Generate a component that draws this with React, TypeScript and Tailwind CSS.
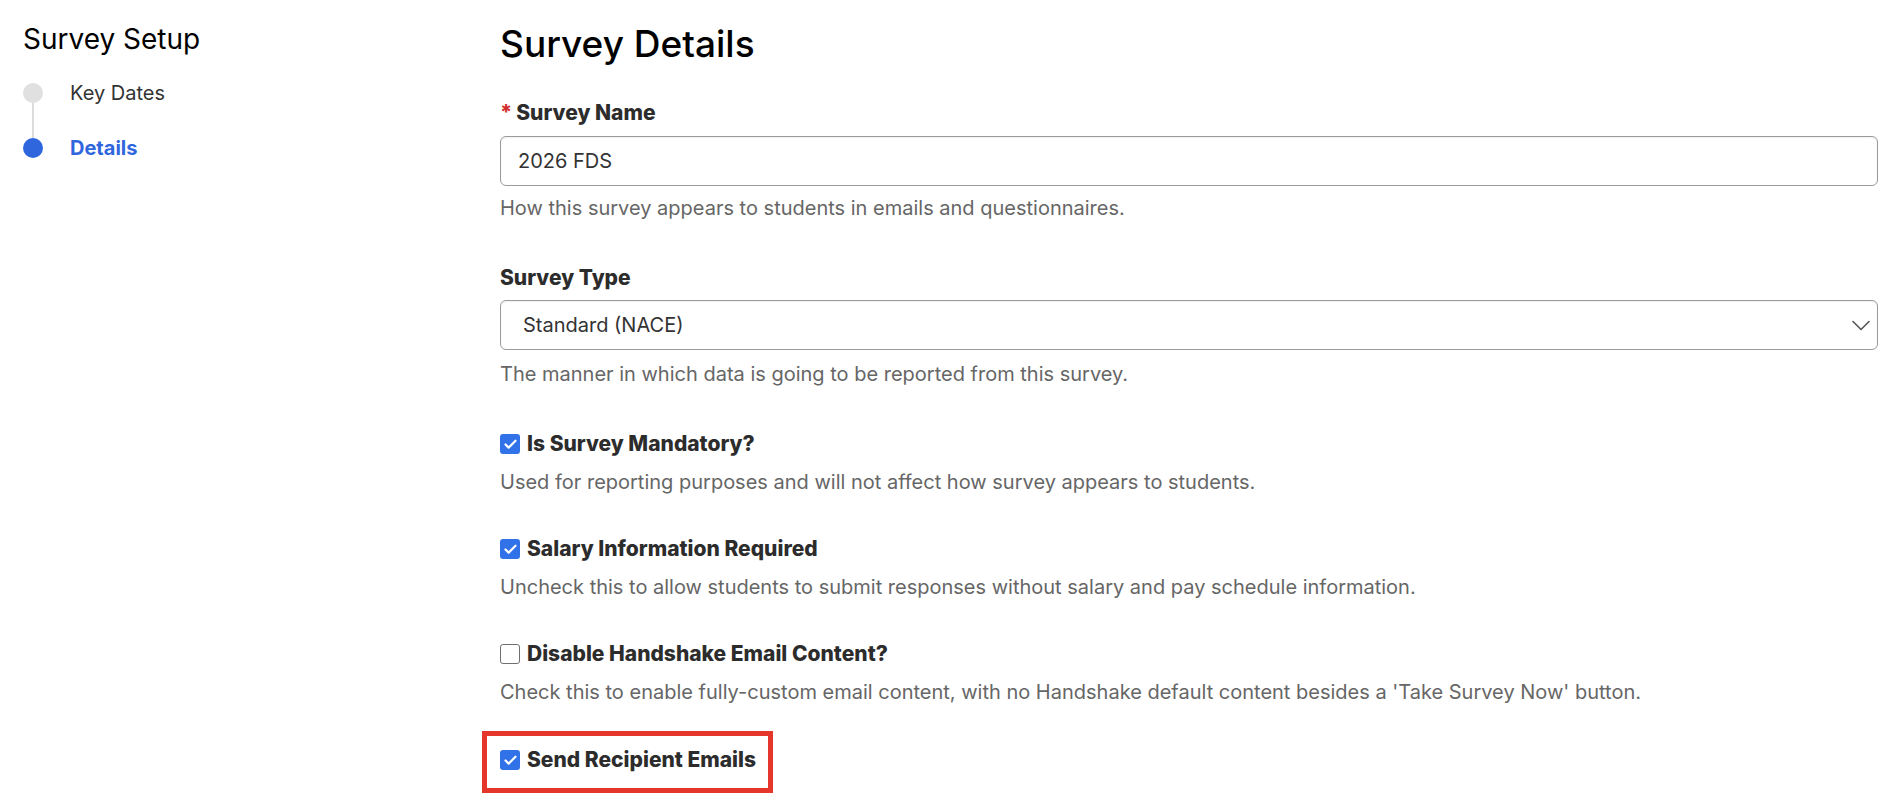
import { Check } from 'lucide-react';

const CheckBox = ({ checked }: { checked: boolean }) =>
  checked ? (
    <span className="flex h-[20px] w-[20px] shrink-0 items-center justify-center rounded-[3px] bg-[#3272e8]">
      <Check className="h-[15px] w-[15px] text-white" strokeWidth={3.5} />
    </span>
  ) : (
    <span className="h-[20px] w-[20px] shrink-0 rounded-[3px] border-[1.5px] border-[#6f6f6f] bg-white" />
  );

const CheckField = ({ label, help, checked, first }: { label: string; help: string; checked: boolean; first?: boolean }) => (
  <div className={first ? 'mt-[42px]' : 'mt-[39px]'}>
    <label className="flex items-center gap-[7px] text-[21px] font-extrabold leading-[28px] text-[#2c2c2c]">
      <CheckBox checked={checked} />
      {label}
    </label>
    <p className="mt-[10px] text-[20px] leading-[28px] text-[#666666]">{help}</p>
  </div>
);

const App = () => {
  const steps = [
    { name: 'Key Dates', active: false },
    { name: 'Details', active: true }
  ];

  return (
    <div className="flex min-h-[810px] bg-white font-['Inter',sans-serif]">
      <aside className="w-[500px] shrink-0 pl-[23px] pt-[21px]">
        <h2 className="text-[28px] leading-[36px] text-black">Survey Setup</h2>
        <ul className="mt-[26px]">
          {steps.map((step, i) => (
            <li key={step.name}>
              {i > 0 && <div className="ml-[9px] h-[35px] w-[2px] bg-[#dcdcdc]" />}
              <div className="flex h-[20px] items-center gap-[27px]">
                <span className={`h-[20px] w-[20px] rounded-full ${step.active ? 'bg-[#2f66de]' : 'bg-[#e0e0e0]'}`} />
                <span className={`text-[20px] ${step.active ? 'font-bold text-[#2f66de]' : 'text-[#333333]'}`}>
                  {step.name}
                </span>
              </div>
            </li>
          ))}
        </ul>
      </aside>

      <main className="flex-1 pr-[16px] pt-[22px]">
        <h1 className="text-[37px] font-medium leading-[44px] text-black">Survey Details</h1>

        <div className="mt-[33px]">
          <label className="block text-[21px] font-extrabold leading-[28px] text-[#2c2c2c]">
            <span className="mr-[4px] text-[#d32f2f]">*</span>Survey Name
          </label>
          <div className="mt-[9px] flex h-[50px] items-center rounded-[6px] border border-[#9a9a9a] pl-[17px] text-[20px] text-[#333333] shadow-[inset_0_1px_2px_rgba(0,0,0,0.06)]">
            2026 FDS
          </div>
          <p className="mt-[8px] text-[20px] leading-[28px] text-[#666666]">
            How this survey appears to students in emails and questionnaires.
          </p>
        </div>

        <div className="mt-[42px]">
          <label className="block text-[21px] font-extrabold leading-[28px] text-[#2c2c2c]">Survey Type</label>
          <div className="mt-[8px] flex h-[50px] items-center justify-between rounded-[6px] border border-[#9a9a9a] pl-[22px] pr-[7px] text-[20px] text-[#333333] shadow-[inset_0_1px_2px_rgba(0,0,0,0.06)]">
            Standard (NACE)
            <svg width="18" height="11" viewBox="0 0 18 11" fill="none" className="text-[#555555]">
              <polyline points="1,1.5 9,9.5 17,1.5" stroke="currentColor" strokeWidth="1.6" strokeLinecap="round" strokeLinejoin="round" />
            </svg>
          </div>
          <p className="mt-[10px] text-[20px] leading-[28px] text-[#666666]">
            The manner in which data is going to be reported from this survey.
          </p>
        </div>

        <CheckField
          first
          checked
          label="Is Survey Mandatory?"
          help="Used for reporting purposes and will not affect how survey appears to students."
        />
        <CheckField
          checked
          label="Salary Information Required"
          help="Uncheck this to allow students to submit responses without salary and pay schedule information."
        />
        <CheckField
          checked={false}
          label="Disable Handshake Email Content?"
          help="Check this to enable fully-custom email content, with no Handshake default content besides a 'Take Survey Now' button."
        />

        <div className="ml-[-18px] mt-[25px] inline-flex border-[5px] border-[#e5362b] pb-[14px] pl-[13px] pr-[12px] pt-[10px]">
          <label className="flex items-center gap-[7px] text-[21px] font-extrabold leading-[28px] text-[#2c2c2c]">
            <CheckBox checked />
            Send Recipient Emails
          </label>
        </div>
      </main>
    </div>
  );
};

export default App;
